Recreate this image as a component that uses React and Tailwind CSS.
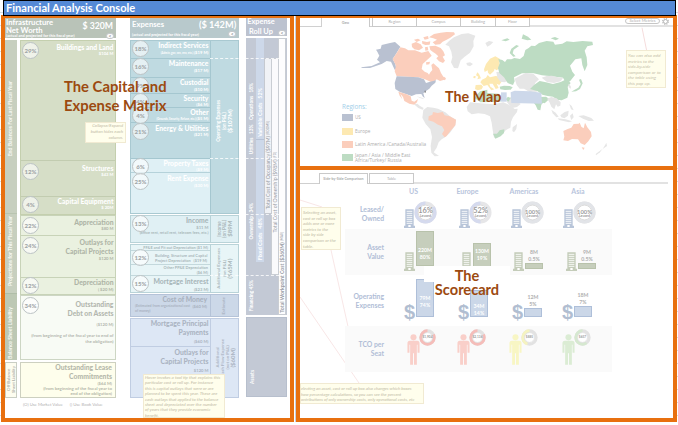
import React from "react";

const Vertical = ({ className = "", children }) => (
  <div className={`flex items-center justify-center overflow-hidden ${className}`}>
    <div className="rotate-180 whitespace-nowrap text-center [writing-mode:vertical-rl]">{children}</div>
  </div>
);

const Percent = ({ children }) => (
  <span className="-mt-px flex size-[17px] shrink-0 items-center justify-center rounded-full border border-[#bcc3c5] bg-white/60 text-[6px] font-black text-[#a0a5a7]">
    {children}
  </span>
);

const Cell = ({ className = "", percent, title, titleClass = "", amount, note }) => (
  <div className={`flex items-start justify-between border-b pl-px pr-[1.5px] ${className}`}>
    {percent ? <Percent>{percent}</Percent> : <span />}
    <div className="flex min-w-0 flex-col items-end whitespace-nowrap text-right">
      <div className={`font-black ${titleClass}`}>{title}</div>
      {amount && <div className="text-[4.2px] font-bold leading-[5px]">{amount}</div>}
      {note && <div className="text-[4.4px] font-bold leading-[6px]">{note}</div>}
    </div>
  </div>
);

const Toggle = () => (
  <span className="flex h-[6px] w-2 items-center justify-center rounded-full border border-[#c4c7ca] bg-white text-[5px] font-black leading-none text-[#999da0]">
    &lt;
  </span>
);

const T = "text-[6.8px] leading-[9px]";
const T8 = "text-[6.8px] leading-[8px]";

function NetWorth() {
  return (
    <div className="flex w-[111px] shrink-0 flex-col">
      <div className="flex h-[20px] justify-between bg-[#b9c3b8] pl-px text-white">
        <div className="whitespace-nowrap font-bold">
          <div className="text-[7.7px] leading-[8px]">
            Infrastructure
            <br />
            Net Worth
          </div>
          <div className="text-[3.9px] leading-[3px]">(actual and projected for this fiscal year)</div>
        </div>
        <div className="flex flex-col items-end pr-0.5">
          <div className="whitespace-nowrap pr-px text-[8.7px] font-bold leading-[15px]">$ 320M</div>
          <Toggle />
        </div>
      </div>
      <div className="mt-[2px] flex justify-between">
        <div className="flex w-3 flex-col text-[5.2px] font-bold text-[#f8faf6]">
          <Vertical className="h-[174px] border-b border-[#b9c4b0] bg-[#c7cfbf] pb-4">End Balances For Last Fiscal Year</Vertical>
          <Vertical className="h-[80px] border-b border-[#b0bda8] bg-[#c7cfbf] pb-1">Projections for This Fiscal Year</Vertical>
          <Vertical className="h-[66px] bg-[#bdc8b4] pt-3">Balance Sheet Liability</Vertical>
          <Vertical className="mt-[2px] h-[36px] border border-[#c9cec4] bg-[#fdfdf0] text-[4.3px] leading-[5px] text-[#aeb1a9]">
            Off Balance
            <br />
            Sheet Liability
          </Vertical>
        </div>
        <div className="flex w-24 flex-col">
          <div className="flex flex-col border border-[#c4cfae] bg-[#d6dec7] text-white">
            <Cell className="h-[120px] border-[#c2ccb0] pt-[2px]" percent="29%" title="Buildings and Land" titleClass={T8} amount="$104 M" />
            <Cell className="h-[36px] border-[#c2ccb0] pt-[3px]" percent="12%" title="Structures" titleClass={T8} amount="$43 M" />
            <Cell className="h-[17px] border-transparent" percent="4%" title="Capital Equipment" titleClass={T8} amount="$ 20M" />
          </div>
          <div className="flex flex-col border border-[#c8d3b8] bg-[#eaf1e0] text-[#afb5a7]">
            <Cell className="h-[20px] border-[#c8d3b8] pt-[2px]" percent="22%" title="Appreciation" titleClass={T8} amount="$80 M" />
            <Cell
              className="h-[42px] border-[#c8d3b8] pt-[2px]"
              percent="24%"
              title={<>Outlays for<br />Capital Projects</>}
              titleClass={T}
              amount="$120 M"
            />
            <Cell className="h-[16px] border-transparent" percent="12%" title="Depreciation" titleClass={T} amount="( $20 M)" />
          </div>
          <Cell
            className="h-[65px] border border-[#cdd6c4] bg-[#f8fbf5] pt-[2px] text-[#b3b7af]"
            percent="34%"
            title={<>Outstanding<br />Debt on Assets</>}
            titleClass="text-[6.8px] leading-[9px] pt-0.5"
            amount={<div className="pt-1">($120 M)</div>}
            note={<div className="-ml-4 pt-1.5">(from beginning of the fiscal year to end of<br />the obligation)</div>}
          />
          <Cell
            className="mt-[2px] h-[36px] border border-[#cdd0c0] bg-[#fefeec] !pr-[3px] text-[#b5b8aa]"
            title={<>Outstanding Lease<br />Commitments</>}
            titleClass={T}
            amount="($64 M)"
            note={<div className="leading-[5px]">(from beginning of the fiscal year to<br />end of the obligation)</div>}
          />
        </div>
      </div>
      <div className="mt-1 flex gap-[7px] pl-[18px] text-[4.3px] leading-[6px] text-[#b3b3b3]">
        <span>(O) Use Market Value</span>
        <span>() Use Book Value</span>
      </div>
    </div>
  );
}

function Expenses() {
  return (
    <div className="ml-[14px] flex w-[109px] shrink-0 flex-col">
      <div className="flex h-[20px] justify-between bg-[#b8c9cc] pl-0.5 text-white">
        <div className="whitespace-nowrap font-bold">
          <div className="text-[7.7px] leading-[12px]">Expenses</div>
          <div className="text-[3.8px] leading-[9px]">(actual and projected for this fiscal year)</div>
        </div>
        <div className="flex flex-col items-end pr-[3px]">
          <div className="whitespace-nowrap text-[9.2px] font-bold leading-[13px]">($ 142M)</div>
          <Toggle />
        </div>
      </div>
      <div className="mt-[2px] flex h-[174px] border border-[#a9c9d1]">
        <div className="flex w-[79px] flex-col text-white">
          <div className="flex flex-col bg-[#bfdae1]">
            <Cell className="h-[18px] border-[#a5c7d0]" percent="18%" title="Indirect Services" titleClass={T} amount={<><span className="text-[2.8px]">(Admin, gov, sec, env, etc.) </span>($19 M)</>} />
            <Cell className="h-[19px] border-[#a5c7d0]" percent="16%" title="Maintenance" titleClass={T} amount="($17 M)" />
            <Cell className="h-[16px] border-[#a5c7d0]" percent="9%" title="Custodial" titleClass={T} amount="($10 M)" />
            <Cell className="h-[14px] border-[#a5c7d0]" percent="4%" title="Security" titleClass={T8} amount="($6 M)" />
            <Cell className="h-[15px] border-[#a5c7d0]" percent="4%" title="Other" titleClass={T8} amount={<><span className="text-[2.8px]">(Grounds, Security, Refuse, etc.) </span>($5 M)</>} />
            <Cell className="h-[36px] border-[#a5c7d0] pt-px" percent="21%" title="Energy &amp; Utilities" titleClass={T8} amount="($21 M)" />
          </div>
          <div className="flex flex-1 flex-col bg-[#dff0f5]">
            <Cell className="h-[14px] border-[#b5d2da]" percent="6%" title="Property Taxes" titleClass={T8} amount="($9 M)" />
            <Cell className="border-transparent pt-px" percent="25%" title="Rent Expense" titleClass={T} amount="($30 M)" />
          </div>
        </div>
        <Vertical className="flex-1 border-l border-[#a5c7d0] bg-[#bfdae1] pb-3 text-[4.7px] font-bold leading-[5.5px] text-white">
          Operating Expenses
          <br />
          (on P&amp;L)
          <br />
          <span className="text-[6.2px]">($107M)</span>
        </Vertical>
      </div>
      <div className="mt-px flex h-[28px] border border-[#b9d3d8] bg-[#e0f0f4] text-[#a9b7ba]">
        <Cell
          className="w-[79px] border-transparent"
          percent="13%"
          title="Income"
          titleClass={T}
          amount="$11 M"
          note={<div className="-ml-8 text-[3.8px]">(office rent, retail rent, telecom fees, etc.)</div>}
        />
        <Vertical className="flex-1 border-l border-[#b9d3d8] text-[4.7px] font-bold leading-[5px]">
          Income
          <br />
          (on P&amp;L)
          <br />
          <span className="text-[6px]">$89M</span>
        </Vertical>
      </div>
      <div className="mt-px flex h-[49px] border border-[#b9d3d8] bg-[#e8f5f7] text-[#a9b7ba]">
        <div className="flex w-[79px] flex-col text-[3.9px] font-bold">
          <div className="h-[6px] border-b border-[#c3d8dc] pr-0.5 text-right leading-[5px]">FF&amp;E and Fit out Depreciation ($1 M)</div>
          <div className="flex h-[14px] items-center gap-1.5 border-b border-[#c3d8dc] pl-px">
            <Percent>12%</Percent>
            <div className="whitespace-nowrap leading-[5px]">
              Building, Structure and Capital
              <br />
              Project Depreciation &nbsp; ($19 M)
            </div>
          </div>
          <div className="h-[11px] border-b border-[#c3d8dc] pr-0.5 text-right leading-[5px]">
            Other PP&amp;E Depreciation
            <br />
            ($6 M)
          </div>
          <Cell className="border-transparent" percent="15%" title="Mortgage Interest" titleClass="text-[6.8px] leading-[11px]" amount="($23 M)" />
        </div>
        <Vertical className="flex-1 border-l border-[#b9d3d8] text-[4.5px] font-bold leading-[5.5px]">
          Additional Expenses
          <br />
          (on P&amp;L)
          <br />
          <span className="text-[6.2px]">($65M)</span>
        </Vertical>
      </div>
      <div className="mt-px flex h-[23px] border border-[#b5c3d8] bg-[#ccd8e8] text-[#a9b2bf]">
        <div className="w-[79px] pl-1 pr-[3px] font-bold">
          <div className={`${T} text-right font-black`}>Cost of Money</div>
          <div className="flex justify-between whitespace-nowrap text-[3.5px] leading-[5px]">
            <span>
              (Estimated from organizational cost
              <br />
              of money)
            </span>
            <span className="text-[4.2px]">($60 M)</span>
          </div>
        </div>
        <Vertical className="flex-1 border-l border-[#b5c3d8] text-[4.5px] font-bold">Estimate</Vertical>
      </div>
      <div className="mt-px flex h-[80px] border border-[#c0cde2] bg-[#dde7f5] text-[#abb4c2]">
        <div className="flex w-[79px] flex-col">
          <Cell className="h-[28px] border-[#c0cde2]" title={<>Mortgage Principal<br />Payments</>} titleClass={T} amount={<div className="pt-0.5">($60 M)</div>} />
          <Cell className="border-transparent pt-px" title={<>Outlays for<br />Capital Projects</>} titleClass={T} amount={<div className="pt-[2px]">$120 M</div>} />
        </div>
        <Vertical className="flex-1 border-l border-[#c0cde2] text-[4.4px] font-bold leading-[5px]">
          Additional
          <br />
          Cash Flow Expense
          <br />
          (not on P&amp;L)
          <br />
          <span className="text-[6px]">($60M)</span>
        </Vertical>
      </div>
    </div>
  );
}

function RollUp() {
  const dash = "absolute h-px border-t border-dashed border-white/80";
  return (
    <div className="ml-[7px] flex w-[41px] shrink-0 flex-col">
      <div className="flex h-[18px] items-end justify-between bg-[#bcc2cf] text-white">
        <div className="w-[30px] whitespace-nowrap text-center text-[7.4px] font-bold leading-[9.5px]">
          Expense
          <br />
          Roll Up
        </div>
        <div className="pr-px">
          <Toggle />
        </div>
      </div>
      <div className="relative mt-[2px] flex h-[277px] bg-[#c3c9d5] text-[4.8px] font-bold leading-[6px] text-white">
        <div className="flex w-[10px] flex-col">
          <Vertical className="h-[120px] !items-end pb-1">Utilities &nbsp; 13% &nbsp;&nbsp; Operations &nbsp; 18%</Vertical>
          <Vertical className="h-[117px] !items-end pb-[35px]">Ownership &nbsp; 34%</Vertical>
          <Vertical className="flex-1 !items-end pb-1">Financing 45%</Vertical>
        </div>
        <div className="flex w-2 flex-col text-[5.4px]">
          <Vertical className="h-[102px] !items-end border-b border-[#b7c2d6] bg-[#cdd8e9] pb-0.5">Variable Costs &nbsp; 52%</Vertical>
          <Vertical className="h-[122px] !items-end bg-[#cdd8e9] pb-0.5">Fixed Costs &nbsp; 48%</Vertical>
        </div>
        <div className="flex w-[7px] flex-col pt-[20px] text-[5.2px] font-normal text-[#989ca5]">
          <Vertical className="h-[156px] !items-end border-y border-l border-[#c5c9d0] bg-[#f0f2f6] pb-1">
            Total Cost of Occupancy ($97M) <span className="text-[3.2px]">[ROOMS]</span>
          </Vertical>
        </div>
        <div className="flex w-[7px] flex-col pt-[20px] text-[5.2px] font-normal text-[#989ca5]">
          <Vertical className="h-[217px] !items-end border-y border-l border-[#c9cdd3] bg-[#fafafc] pb-[42px]">
            Total Cost of Ownership ($98M) <span className="text-[3.2px]">[FD]</span>
          </Vertical>
        </div>
        <Vertical className="w-2 !items-end border border-[#c9cdd3] bg-[#fdfdfe] pb-px text-[5.2px] text-[#989ca5]">
          Total Workpoint Cost ($360M) <span className="text-[3.2px] font-normal">[MAX]</span>
        </Vertical>
        <span className={`${dash} -left-9 right-2 top-[20px]`} />
        <span className={`${dash} -left-9 right-2 top-[120px]`} />
        <span className={`${dash} -left-9 right-2 top-[176px]`} />
        <span className={`${dash} -left-9 right-2 top-[237px]`} />
      </div>
      <Vertical className="mt-[2px] h-[80px] w-[41px] border border-[#b7bfcd] bg-[#c3c9d5] pr-7 pt-10 text-[4.8px] font-bold text-white">Assets</Vertical>
    </div>
  );
}

const Note = ({ className = "", children }) => (
  <div className={`border border-[#f1ead2] bg-[#fffeec] italic text-[#c0b9a4] ${className}`}>{children}</div>
);

const grey = "#e6e6e6";
const green = "#bddcc3";
const salmon = "#fbcebc";
const yellow = "#fde9b2";
const navy = "#b9c1d1";

const lands = [
  [navy, "262,128 258,122 272,119 275,108 300,102 315,99 331,113 318,135 308,150 316,165 319,180 314,182 303,158 290,156 275,165 240,177 215,177 214,175 245,171 270,160 261,152 268,140"],
  [salmon, "331,115 345,118 355,124 375,124 395,131 415,126 425,140 412,152 398,165 395,180 404,188 413,192 417,197 421,190 427,183 424,168 430,163 440,172 447,178 453,192 460,203 468,211 450,216 440,211 435,215 430,222 405,211 385,205 320,202 314,187 318,170 308,150 320,132"],
  [salmon, "365,104 378,99 392,106 399,116 387,124 373,121 366,114"],
  [salmon, "372,92 384,89 392,94 380,99"],
  [salmon, "396,96 411,99 421,97 419,107 406,108 397,104"],
  [salmon, "400,85 414,81 416,89 404,92"],
  [salmon, "417,85 432,75 452,71 470,69 492,70 495,76 481,86 470,92 458,98 450,106 436,107 428,100 441,92 430,88"],
  [salmon, "418,112 436,110 452,117 460,127 465,139 458,143 465,155 459,162 447,157 439,148 445,142 437,134 429,129 421,123"],
  [salmon, "405,115 413,113 415,124 406,125"],
  [salmon, "408,160 420,158 418,166 409,167"],
  [salmon, "453,208 462,203 468,208 463,214"],
  [navy, "320,202 385,205 402,211 408,222 420,218 438,214 436,221 425,230 418,239 407,247 400,253 404,267 399,263 394,255 378,256 365,261 350,256 330,249 316,240 314,222"],
  [salmon, "325,248 350,256 362,262 365,275 373,278 384,270 381,280 373,287 358,284 343,276 339,264 331,254 337,271 329,260"],
  [grey, "372,286 382,284 390,291 401,297 398,302 385,297"],
  [grey, "380,262 398,267 403,271 390,267"],
  [grey, "478,95 492,85 515,75 535,73 556,80 550,96 551,112 540,131 524,143 512,154 504,178 492,177 483,160 487,145 484,128 477,112 466,107"],
  [grey, "529,162 540,160 549,165 540,172 531,169"],
  [grey, "400,303 412,294 430,296 444,299 466,310 480,322 498,332 496,349 480,371 466,384 455,391 446,400 440,416 431,430 447,441 434,442 424,431 422,410 426,384 421,361 407,345 397,326"],
  [salmon, "416,322 427,317 429,309 443,312 458,309 464,319 479,322 498,332 496,349 481,366 470,381 464,385 456,375 463,363 456,352 444,347 430,338 415,334"],
  [yellow, "557,228 574,227 579,233 575,241 563,244 555,240"],
  [yellow, "558,199 562,190 567,195 573,208 562,211 565,203"],
  [yellow, "551,201 557,201 556,208 550,207"],
  [yellow, "571,220 576,212 588,206 593,198 600,205 617,201 631,203 639,212 632,222 628,228 620,224 626,237 617,240 608,224 598,224 601,233 613,241 604,244 592,228 581,231"],
  [yellow, "582,181 588,165 600,149 616,142 629,149 628,161 632,177 619,184 614,179 612,186 600,197 594,191 593,184 584,189"],
  [grey, "586,102 597,96 610,99 601,108 592,113"],
  [grey, "619,189 634,188 648,202 654,216 643,220 631,218 622,205"],
  [green, "625,150 637,153 645,159 651,151 664,151 673,147 690,150 701,141 706,123 716,117 724,110 735,111 747,102 770,96 790,98 795,107 817,104 830,97 850,99 878,96 907,98 909,108 892,112 884,125 890,145 892,168 884,187 877,168 874,148 856,151 840,170 847,188 855,198 840,217 828,222 819,206 785,202 756,199 731,193 696,193 672,205 674,217 669,228 653,222 642,205 628,192 624,177 629,163"],
  [green, "659,132 664,119 679,108 687,111 671,122 668,133 677,142 670,143"],
  [green, "695,89 699,76 714,83 724,92 712,94"],
  [green, "634,94 652,88 659,92 647,97"],
  [green, "782,88 795,84 807,89 797,94"],
  [grey, "674,209 689,201 707,192 731,195 747,211 736,221 730,237 742,248 719,249 702,239 689,239 680,228"],
  [grey, "755,206 770,201 786,200 800,204 819,207 812,217 792,222 771,219"],
  [green, "720,240 733,227 749,216 768,220 789,225 812,219 829,211 842,222 833,233 836,251 832,266 815,274 800,272 789,263 773,261 757,257 743,247"],
  [green, "844,248 854,242 865,236 872,225 867,212 873,210 878,223 870,240 858,247"],
  [grey, "835,224 842,231 843,239 836,235"],
  [green, "629,233 642,230 659,231 668,235 662,242 645,243 631,241"],
  [green, "730,280 762,278 754,287 751,304 743,302 737,289"],
  [green, "750,264 768,263 778,270 764,283 750,279"],
  [grey, "771,269 784,264 800,268 812,280 811,290 803,293 798,286 793,301 784,293 778,279"],
  [grey, "784,302 797,311 806,323 799,325 788,313"],
  [grey, "811,319 824,309 836,305 834,320 823,328 814,325"],
  [grey, "803,328 827,331 846,337 837,340 807,333"],
  [grey, "840,320 848,313 851,325 844,333"],
  [grey, "865,321 881,319 904,327 912,335 896,336 879,329"],
  [grey, "838,285 845,291 851,304 843,301"],
  [green, "553,266 570,247 592,242 592,252 626,254 632,278 571,280"],
  [grey, "530,294 540,280 571,283 610,286 640,280 662,290 674,300 683,299 681,309 669,325 663,338 661,356 647,364 640,373 624,385 612,386 608,363 605,341 600,322 584,315 565,313 545,316 533,307"],
  [green, "609,374 621,374 629,364 643,361 642,372 632,382 616,389"],
  [grey, "668,355 681,345 679,360 672,370 667,366"],
  [grey, "650,278 668,257 677,275 692,285 681,294 667,297 658,288"],
  [green, "646,271 654,263 662,267 655,278"],
  ["#cdd8ea", "633,250 650,250 650,278 633,278"],
  ["#cdd8ea", "662,250 674,245 720,247 754,251 756,284 664,282"],
  [salmon, "820,366 833,360 844,356 851,345 866,344 869,341 874,353 881,358 885,341 892,355 903,369 905,382 895,397 884,408 872,403 864,391 846,390 834,396 820,394 823,383"],
  [salmon, "875,415 884,416 880,423"],
  [grey, "949,401 951,411 938,420 945,409"],
  [grey, "938,419 930,430 918,439 917,435"],
];

const Tab = ({ className = "", children }) => (
  <div className={`flex items-center justify-center text-[4px] text-[#adadad] ${className}`}>{children}</div>
);

function MapPanel() {
  const regions = [
    ["bg-[#b9c1d1]", "US", "text-[4.6px]"],
    ["bg-[#fde9b2]", "Europe", "text-[4.6px]"],
    ["bg-[#fbcebc]", "Latin America /Canada/Australia", "text-[4.75px]"],
    ["bg-[#bddcc3]", <>Japan / Asia / Middle East<br />Africa/Turkey/ Russia</>, "text-[4.75px]"],
  ];
  return (
    <section className="flex h-[155px] flex-col border-4 border-t-[3px] border-[#e8700f] bg-white">
      <div className="flex h-[9px] shrink-0">
        <div className="w-[22px] border-b border-r border-[#d0d0d0]" />
        <Tab className="w-[48px] border-r border-[#c9c9c9] font-bold">Geo</Tab>
        <div className="w-[2px] border-b border-[#d0d0d0]" />
        <Tab className="w-[45px] border-b border-x border-[#c9c9c9]">Region</Tab>
        <Tab className="w-[44px] border-b border-r border-[#c9c9c9]">Campus</Tab>
        <Tab className="w-[35px] border-b border-r border-[#c9c9c9]">Building</Tab>
        <Tab className="w-[34px] border-b border-r border-[#c9c9c9]">Floor</Tab>
        <div className="flex flex-1 items-start justify-end gap-0.5 border-b-2 border-[#e2e2e2] pr-[4px]">
          <span className="flex h-[6px] w-[35px] items-center justify-center rounded-full border border-[#c6c6c6] text-[4.2px] leading-none text-[#ababab]">Select Metrics</span>
          <svg viewBox="0 0 14 14" className="size-[7px]">
            <circle cx="7" cy="7" r="5.8" fill="none" stroke="#b8b8b8" strokeWidth="2.2" strokeDasharray="2.6 1.95" />
            <circle cx="7" cy="7" r="4" fill="none" stroke="#b8b8b8" strokeWidth="2" />
          </svg>
        </div>
      </div>
      <div className="grid flex-1 grid-cols-1 grid-rows-1">
        <svg viewBox="30 54 1122 417" className="h-[139px] w-[374px] [grid-area:1/1]">
          {lands.map(([fill, points], i) => (
            <polygon key={i} points={points} fill={fill} />
          ))}
          <rect x="404" y="245" width="3" height="6" fill="#6b6b6b" />
          <path d="M1056 56L1070 125" stroke="#f5dcdc" strokeWidth="3" />
        </svg>
        <div className="flex flex-col pl-[42px] pt-[75px] font-['Open_Sans',sans-serif] text-[#adadad] [grid-area:1/1]">
          <div className="text-[6.3px] leading-[9px] text-[#a0cee8]">Regions:</div>
          <div className="flex flex-col">
            {regions.map(([color, label, size], i) => (
              <div key={i} className={`flex h-[13.4px] items-center gap-[2px] leading-[5px] ${size}`}>
                <span className={`h-[7px] w-[11px] ${color}`} />
                <span className="whitespace-nowrap">{label}</span>
              </div>
            ))}
          </div>
        </div>
        <div className="flex items-start justify-end pr-[7px] pt-[23px] [grid-area:1/1]">
          <Note className="h-[38px] w-[40px] whitespace-nowrap pl-px pt-0.5 font-['Open_Sans',sans-serif] text-[4.3px] leading-[5.5px]">
            You can also add<br />metrics to the<br />side-by-side<br />comparison or to<br />the table using<br />this pop up.
          </Note>
        </div>
        <div className="flex items-start pl-[145px] pt-[62px] [grid-area:1/1]">
          <h2 className="whitespace-nowrap text-[14.3px] font-bold leading-[16px] text-[#9c4a10]">The Map</h2>
        </div>
      </div>
    </section>
  );
}

const Building = ({ color }) => (
  <svg viewBox="0 0 33 57" className="h-[19px] w-[11px] shrink-0">
    <path d="M4 1H29V50H33V57H0V50H4Z" fill={color} />
    <path d="M8 7H25M8 13H25M8 19H25M8 25H25M8 31H25M8 37H25M8 43H25" stroke="#fff" strokeWidth="2.6" />
    <rect x="13" y="48" width="7" height="6" fill="#fff" />
  </svg>
);

const Person = ({ color }) => (
  <svg viewBox="0 0 38 92" className="h-[31px] w-[13px] shrink-0" fill={color}>
    <circle cx="19" cy="10" r="9" />
    <path d="M8 20H30Q37 20 37 28V56H31V32H29V91H20.5V57H17.500V91H9V32H7V56H1V28Q1 20 8 20Z" />
  </svg>
);

const Donut = ({ size, ring, rest, share, width, children }) => (
  <div className={`grid shrink-0 place-items-center ${size}`}>
    <svg viewBox="0 0 100 100" className="size-full [grid-area:1/1]">
      <circle cx="50" cy="50" r={48 - width / 2} fill="#fff" stroke={rest} strokeWidth={width} />
      <circle cx="50" cy="50" r={48 - width / 2} fill="none" stroke={ring} strokeWidth={width} pathLength="100" strokeDasharray={`${share} 100`} transform="translate(100 0) scale(-1 1) rotate(-90 50 50)" />
      <circle cx="50" cy="50" r={46 - width} fill="#fff" stroke="#cccccc" strokeWidth="3" />
    </svg>
    <div className="text-center font-bold text-[#9c9c9c] [grid-area:1/1]">{children}</div>
  </div>
);

const columns = [
  { name: "US", leased: "16%", ring: "#d5daee", share: 84, asset: ["220M", "80%"], assetBar: "h-[35px] mb-[5px] pb-[5px]", opex: ["79M", "74%"], opexBar: "h-[38px] pb-[8px]", big: true, person: "#f9cfc9", tco: "$1,904", tcoShare: 82, tcoRing: "#f5bdb9" },
  { name: "Europe", leased: "52%", ring: "#d5daee", share: 50, asset: ["130M", "19%"], assetBar: "h-[24px] mb-[4px] pb-[5px]", opex: ["34M", "14%"], opexBar: "h-[27px]", big: true, person: "#f9cfc9", tco: "$2,136", tcoShare: 82, tcoRing: "#f5bdb9" },
  { name: "Americas", leased: "100%", ring: "#e2e4e8", share: 100, asset: ["8M", "0.5%"], assetBar: "h-[6px] mb-[2px]", opex: ["12M", "5%"], opexBar: "h-[9px]", person: "#f8f6c4", tco: "$885", tcoShare: 45, tcoRing: "#f5f3c0" },
  { name: "Asia", leased: "100%", ring: "#e2e4e8", share: 100, asset: ["9M", "0.5%"], assetBar: "h-[6px] mb-[2px]", opex: ["18M", "7%"], opexBar: "h-[11px]", person: "#dbecd4", tco: "$657", tcoShare: 60, tcoRing: "#d6e8d0" },
];

const Bar = ({ className, values, big }) => (
  <div className="flex w-[18px] shrink-0 flex-col text-center text-[5.2px] font-bold leading-[6.5px]">
    {!big && <div className="pb-px text-[#b0b0b0]">{values[0]}<br />{values[1]}</div>}
    <div className={`flex flex-col justify-end border text-white ${className}`}>
      {big && <div>{values[0]}<br />{values[1]}</div>}
    </div>
  </div>
);

const Row = ({ className = "", cols, label, render }) => (
  <div className={`flex ${className}`}>
    <div className="flex w-[39px] shrink-0 items-center justify-end whitespace-nowrap text-right text-[6.8px] font-bold leading-[9px] text-[#b0bdd6]">{label}</div>
    <div className={`grid shrink-0 ${cols}`}>
      {columns.map((c) => (
        <div key={c.name} className="flex">{render(c)}</div>
      ))}
    </div>
  </div>
);

function Scorecard() {
  return (
    <section className="relative -mt-1 flex h-[256px] flex-col border-4 border-[#e8700f] bg-white">
      <svg viewBox="300 170 374 248" className="absolute left-0 top-0 h-[248px] w-[374px]">
        <path d="M300 200L322 207M331 250L351 340M300 297L359 383" fill="none" stroke="#f7e3e3" strokeWidth=".9" />
      </svg>
      <div className="flex h-[14px] shrink-0 pt-[3px]">
        <div className="w-[19px] border-b border-[#cfcfcf]" />
        <Tab className="w-[49px] whitespace-nowrap border border-b-0 border-[#c9c9c9] !text-[3.6px] font-bold">Side-by-Side Comparison</Tab>
        <div className="w-px border-b border-[#cfcfcf]" />
        <Tab className="w-[45px] border border-[#c9c9c9]">Table</Tab>
        <div className="w-[254px] border-b-2 border-[#e2e2e2]" />
      </div>
      <div className="flex">
        <div className="w-[45px] shrink-0 pl-px pt-[23px]">
          <Note className="h-[43px] w-[40px] whitespace-nowrap pl-px pt-0.5 text-[4.4px] leading-[5.6px]">
            Selecting an asset,<br />cost or roll up box<br />adds one or more<br />metrics to the<br />side by side<br />comparison or the<br />table.
          </Note>
        </div>
        <div className="relative flex w-[267px] flex-col">
          <div className="ml-[42px] grid h-[15px] grid-cols-[53px_55px_58px_50px] text-center text-[7px] font-bold leading-[15px] text-[#b7c4dc]">
            {columns.map((c) => <div key={c.name}>{c.name}</div>)}
          </div>
          <Row
            className="h-[30px]"
            cols="ml-[20px] grid-cols-[55px_52px_52px_36px]"
            label={<>Leased/<br />Owned</>}
            render={(c) => (
              <>
                <div className="pt-[10px]"><Building color="#b8c5d9" /></div>
                <Donut size="-ml-px mt-[2px] size-[23px]" ring={c.ring} rest="#e6e6e8" share={c.share} width={14}>
                  <div className={c.big ? "text-[7.4px] leading-[6px]" : "text-[5.8px] leading-[5px]"}>{c.leased}</div>
                  <div className="text-[3.6px] leading-[3px]">Leased</div>
                </Donut>
              </>
            )}
          />
          <Row
            className="h-[46px] bg-[#fafafa]"
            cols="ml-[20px] grid-cols-[57px_52px_53px_36px]"
            label={<>Asset<br />Value</>}
            render={(c) => (
              <div className="flex items-end gap-px pb-[4px]">
                <Building color="#c4ccb9" />
                <Bar big={c.big} values={c.asset} className={`${c.assetBar} border-[#b8c2ab] bg-[#c6cebc]`} />
              </div>
            )}
          />
          <Row
            className="h-[51px]"
            cols="ml-[20px] grid-cols-[54px_54px_50px_36px]"
            label={<>Operating<br />Expenses</>}
            render={(c) => (
              <div className="flex items-end gap-px pb-[9px]">
                <span className="-mb-[5px] w-[11px] text-center font-['Liberation_Sans',sans-serif] text-[20px] font-bold leading-[20px] text-[#b1bed1]">$</span>
                <Bar big={c.big} values={c.opex} className={`${c.opexBar} border-[#aebfd9] bg-[#cbd7e8]`} />
              </div>
            )}
          />
          <Row
            className="h-[46px] bg-[#fafafa]"
            cols="ml-[23px] grid-cols-[50px_52px_53px_36px]"
            label={<>TCO per<br />Seat</>}
            render={(c) => (
              <>
                <div className="pt-[8px]"><Person color={c.person} /></div>
                <Donut size="-ml-px mt-[3px] size-[17px]" ring={c.tcoRing} rest="#e2e2e2" share={c.tcoShare} width={17}>
                  <div className="text-[3.2px] leading-[3px]">{c.tco}</div>
                </Donut>
              </>
            )}
          />
          <h2 className="absolute left-[79px] top-[82px] w-[86px] text-center text-[14.6px] font-bold leading-[14px] text-[#9c4a10]">
            <span className="block h-[16px] bg-white pt-[3px]">The</span>
            <span className="block pt-px">Scorecard</span>
          </h2>
        </div>
      </div>
      <Note className="mt-[11px] h-[21px] w-[124px] whitespace-nowrap pt-0.5 text-[4.35px] leading-[5.5px]">
        electing an asset, cost or roll up box also changes which boxes<br />how percentage calculations, so you can see the percent<br />ontributions of only ownership costs, only operational costs, etc
      </Note>
    </section>
  );
}

export default function App() {
  return (
    <div className="flex h-[425px] w-[678px] flex-col overflow-hidden bg-white bg-[repeating-linear-gradient(to_bottom,#fff_0,#fff_12px,#d9dde2_12px,#d9dde2_13px)] font-[Lato,sans-serif]">
      <header className="z-10 ml-[3px] flex h-4 w-[673px] shrink-0 items-center border border-black bg-[#558ad6] pl-[2px]">
        <h1 className="whitespace-nowrap text-[11.1px] font-bold leading-none text-white">Financial Analysis Console</h1>
      </header>
      <div className="-mt-px flex w-[677px] pl-px">
        <section className="relative flex h-[407px] w-[293px] shrink-0 items-start border-4 border-t-[3px] border-[#e8700f] bg-white">
          <NetWorth />
          <Expenses />
          <RollUp />
          <Note className="absolute left-[80px] top-[104px] h-[21px] w-[41px] pr-0.5 text-right text-[4.4px] leading-[6px]">
            Collapse/Expand<br />button hides each<br />column.
          </Note>
          <Note className="absolute left-[138px] top-[356px] h-[44px] w-[82px] whitespace-nowrap pl-px text-[4.45px] leading-[5.4px]">
            Hover invokes a tool tip that explains this<br />particular cost or roll up. For instance<br />this is capital outlays that were or are<br />planned to be spent this year. These are<br />cash outlays that applied to the balance<br />sheet and depreciated over the number<br />of years that they provide economic<br />benefit.
          </Note>
          <h2 className="absolute left-[59px] top-[59px] whitespace-nowrap text-[14.8px] font-bold leading-[19px] text-[#9c4a10]">
            The Capital and
            <br />
            Expense Matrix
          </h2>
        </section>
        <div className="w-[2px] shrink-0 border-r border-[#c5cfe0] bg-white" />
        <div className="flex w-[382px] flex-col">
          <MapPanel />
          <Scorecard />
        </div>
      </div>
      <div className="flex-1 bg-white" />
    </div>
  );
}
